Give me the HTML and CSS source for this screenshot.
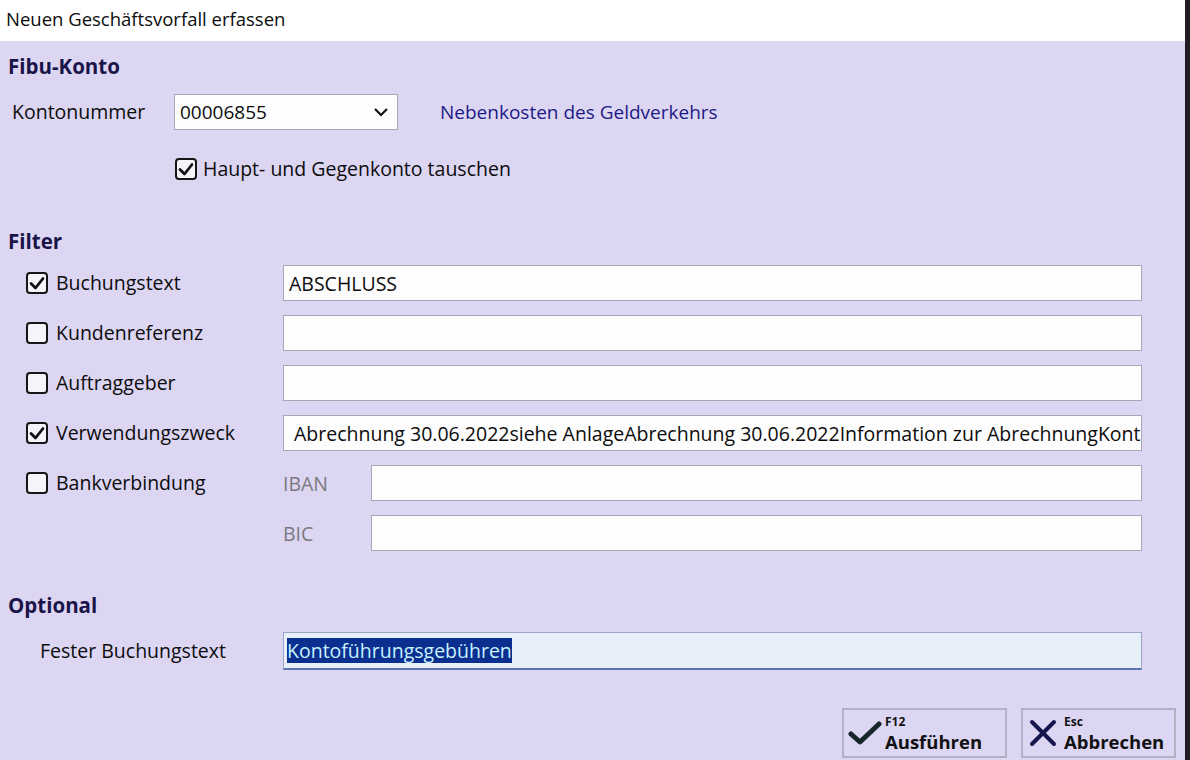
FILE: index.html
```html
<!DOCTYPE html>
<html lang="de">
<head>
<meta charset="utf-8">
<title>Neuen Geschäftsvorfall erfassen</title>
<link rel="stylesheet" href="styles.css">
</head>
<body>
<div class="window">
  <div class="dialog">
    <div class="titlebar">Neuen Geschäftsvorfall erfassen</div>
    <div class="body">
      <section class="sec sec-konto">
        <h2 class="sec-title">Fibu-Konto</h2>
        <div class="konto-row">
          <span class="lbl konto-lbl">Kontonummer</span>
          <div class="select">
            <span class="select-val">00006855</span>
            <svg class="chev" width="16" height="10" viewBox="0 0 16 10"><path d="M2 2 L8 8 L14 2" fill="none" stroke="#111" stroke-width="2.2"/></svg>
          </div>
          <span class="konto-name">Nebenkosten des Geldverkehrs</span>
        </div>
        <div class="cb-row swap">
          <span class="cb checked"><svg viewBox="0 0 22 22" width="22" height="22"><path d="M5 11.5 L9.5 16 L17 6.5" fill="none" stroke="#111" stroke-width="2.8" stroke-linecap="round" stroke-linejoin="round"/></svg></span>
          <span class="lbl">Haupt- und Gegenkonto tauschen</span>
        </div>
      </section>

      <section class="sec sec-filter">
        <h2 class="sec-title">Filter</h2>
        <div class="filter-grid">
          <div class="cb-row">
            <span class="cb checked"><svg viewBox="0 0 22 22" width="22" height="22"><path d="M5 11.5 L9.5 16 L17 6.5" fill="none" stroke="#111" stroke-width="2.8" stroke-linecap="round" stroke-linejoin="round"/></svg></span>
            <span class="lbl">Buchungstext</span>
          </div>
          <div class="field wide"><span class="val">ABSCHLUSS</span></div>

          <div class="cb-row">
            <span class="cb"></span>
            <span class="lbl">Kundenreferenz</span>
          </div>
          <div class="field wide"></div>

          <div class="cb-row">
            <span class="cb"></span>
            <span class="lbl">Auftraggeber</span>
          </div>
          <div class="field wide"></div>

          <div class="cb-row">
            <span class="cb checked"><svg viewBox="0 0 22 22" width="22" height="22"><path d="M5 11.5 L9.5 16 L17 6.5" fill="none" stroke="#111" stroke-width="2.8" stroke-linecap="round" stroke-linejoin="round"/></svg></span>
            <span class="lbl">Verwendungszweck</span>
          </div>
          <div class="field wide"><span class="val long">Abrechnung 30.06.2022siehe AnlageAbrechnung 30.06.2022Information zur AbrechnungKont</span></div>

          <div class="cb-row">
            <span class="cb"></span>
            <span class="lbl">Bankverbindung</span>
          </div>
          <span class="sub-lbl">IBAN</span>
          <div class="field"></div>

          <span class="spacer"></span>
          <span class="sub-lbl">BIC</span>
          <div class="field"></div>
        </div>
      </section>

      <section class="sec sec-optional">
        <h2 class="sec-title">Optional</h2>
        <div class="opt-row">
          <span class="lbl opt-lbl">Fester Buchungstext</span>
          <div class="field focus"><span class="sel">Kontoführungsgebühren</span></div>
        </div>
      </section>

      <div class="actions">
        <button class="btn btn-ok" type="button">
          <svg class="btn-ico" width="34" height="28" viewBox="0 0 34 28"><path d="M3 15 L12 23 L31 5" fill="none" stroke="#18262a" stroke-width="5" stroke-linecap="round" stroke-linejoin="round"/></svg>
          <span class="btn-txt"><span class="key">F12</span><span class="cap">Ausführen</span></span>
        </button>
        <button class="btn btn-cancel" type="button">
          <svg class="btn-ico" width="30" height="28" viewBox="0 0 30 28"><path d="M4 3 L26 25 M26 3 L4 25" fill="none" stroke="#16164e" stroke-width="4" stroke-linecap="round"/></svg>
          <span class="btn-txt"><span class="key">Esc</span><span class="cap">Abbrechen</span></span>
        </button>
      </div>
    </div>
  </div>
  <div class="edge"></div>
</div>
</body>
</html>
```

FILE: styles.css
```css
* { box-sizing: border-box; }
html, body { margin: 0; padding: 0; }
body {
  width: 1190px;
  height: 760px;
  overflow: hidden;
  background: #dcd6f3;
  font-family: "Open Sans", "Noto Sans", "DejaVu Sans", sans-serif;
  color: #111;
}
.window {
  display: flex;
  width: 1190px;
  height: 760px;
}
.dialog {
  flex: 1;
  display: flex;
  flex-direction: column;
  background: #dcd6f3;
}
.edge {
  width: 5px;
  background: #1e1e22;
}
.titlebar {
  height: 42px;
  background: #ffffff;
  border-bottom: 1px solid #d9d6e6;
  padding: 5px 0 0 6px;
  font-size: 18.5px;
  line-height: 28px;
  color: #0c0c0c;
}
.body {
  padding: 12px 0 0 8px;
  display: flex;
  flex-direction: column;
}
.sec-title {
  margin: 0;
  font-size: 20.5px;
  line-height: 24px;
  font-weight: 700;
  color: #1b1448;
}
.lbl {
  font-size: 19.5px;
  line-height: 24px;
  color: #0c0c0c;
  white-space: nowrap;
}
.konto-row {
  display: flex;
  align-items: center;
  margin-top: 16px;
  height: 36px;
}
.konto-lbl {
  width: 166px;
  padding-left: 4px;
}
.select {
  width: 224px;
  height: 36px;
  background: #fdfdfd;
  border: 1px solid #a9a7b3;
  display: flex;
  align-items: center;
  justify-content: space-between;
  padding: 0 8px 0 5px;
}
.select-val {
  font-size: 19px;
  color: #0c0c0c;
}
.konto-name {
  margin-left: 42px;
  font-size: 19px;
  color: #1c1a86;
}
.cb-row {
  display: flex;
  align-items: center;
  gap: 8px;
}
.swap {
  margin-top: 27px;
  margin-left: 167px;
  gap: 6px;
}
.cb {
  width: 22px;
  height: 22px;
  border: 2px solid #161616;
  border-radius: 4px;
  background: #f4f5fb;
  flex: none;
  position: relative;
}
.cb svg {
  position: absolute;
  left: -2px;
  top: -2px;
}
.sec-filter { margin-top: 48px; }
.filter-grid {
  margin-top: 12px;
  padding-left: 18px;
  display: grid;
  grid-template-columns: 257px 88px 771px;
  grid-auto-rows: 36px;
  row-gap: 14px;
  align-items: center;
}
.field {
  height: 36px;
  background: #fdfdfd;
  border: 1px solid #a9a7b3;
  display: flex;
  align-items: center;
  padding: 0 5px;
  overflow: hidden;
}
.field.wide { grid-column: 2 / 4; }
.val {
  font-size: 19.5px;
  color: #0c0c0c;
  white-space: nowrap;
}
.val.long { padding-left: 5px; }
.sub-lbl {
  font-size: 19.5px;
  color: #7a7a80;
}
.sec-optional { margin-top: 42px; }
.opt-row {
  display: flex;
  align-items: center;
  margin-top: 15px;
}
.opt-lbl {
  width: 275px;
  padding-left: 32px;
}
.field.focus {
  width: 859px;
  height: 38px;
  background: #e9eff9;
  border: 1px solid #9aa6c6;
  border-bottom: 2px solid #5a74b4;
  padding: 0 3px;
}
.sel {
  font-size: 19.5px;
  background: #0b2f8e;
  color: #c8f2ff;
  line-height: 25px;
  white-space: nowrap;
}
.actions {
  display: flex;
  justify-content: flex-end;
  gap: 14px;
  margin-top: 38px;
  padding-right: 9px;
}
.btn {
  height: 50px;
  border: 2px solid #b4b0c4;
  background: #dcd6f3;
  display: flex;
  align-items: center;
  padding: 0 0 0 4px;
  gap: 3px;
  font-family: inherit;
  cursor: pointer;
}
.btn-ok { width: 165px; }
.btn-cancel { width: 155px; padding-left: 5px; gap: 6px; }
.btn-txt {
  display: flex;
  flex-direction: column;
  align-items: flex-start;
  padding-top: 1px;
}
.key {
  font-size: 12px;
  line-height: 16px;
  font-weight: 700;
  color: #111;
}
.cap {
  font-size: 18.5px;
  line-height: 24px;
  font-weight: 700;
  color: #111;
}
```
